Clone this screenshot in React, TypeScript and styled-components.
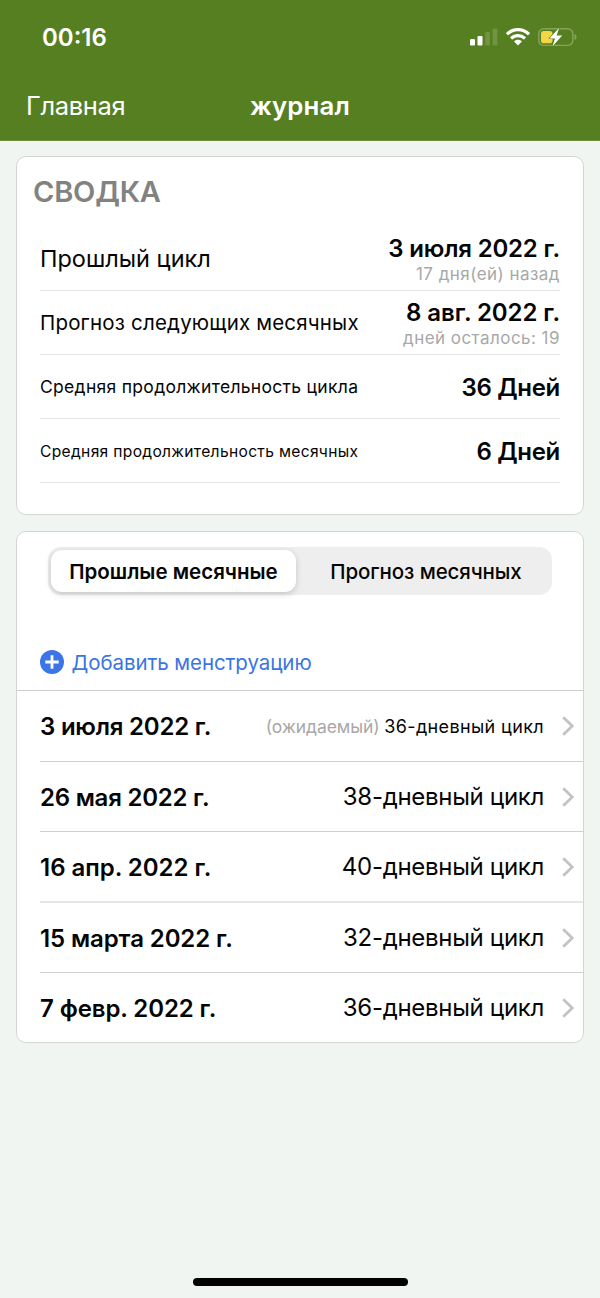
import React from "react";
import styled, { createGlobalStyle, css } from "styled-components";

const GlobalStyle = createGlobalStyle`
  * { box-sizing: border-box; }
  body { margin: 0; background: #f1f5f2; }
`;

const Screen = styled.div`
  width: 600px;
  height: 1298px;
  display: flex;
  flex-direction: column;
  overflow: hidden;
  background: #f1f5f2;
  color: #050505;
  font-family: Inter, "Liberation Sans", sans-serif;
  white-space: nowrap;
`;

const Header = styled.header`
  height: 141px;
  flex: none;
  background: #567f22;
  color: #fff;
  border-bottom: 1px solid #6a8e3c;
`;

const StatusBar = styled.div`
  height: 72px;
  padding: 1px 23px 0 42px;
  display: flex;
  align-items: center;
  justify-content: space-between;
`;

const Clock = styled.span`
  padding-top: 2px;
  font-size: 24px;
  font-weight: 600;
`;

const StatusIcons = styled.div`
  display: flex;
  align-items: center;
`;

const NavBar = styled.nav`
  height: 66px;
  padding: 0 26px;
  display: grid;
  grid-template-columns: 1fr auto 1fr;
  align-items: center;
`;

const BackLink = styled.a`
  font-size: 25.5px;
  letter-spacing: -0.35px;
`;

const NavTitle = styled.h1`
  margin: 0;
  font-size: 25.8px;
  font-weight: 600;
  letter-spacing: 0.2px;
`;

const Card = styled.section`
  margin: 0 16px 16px;
  border: 1px solid #d3d6d4;
  border-radius: 10px;
  background: #fff;
`;

const SummaryCard = styled(Card)`
  height: 359px;
  margin-top: 15px;
  padding: 0 23px;
`;

const JournalCard = styled(Card)`
  height: 512px;
`;

const SummaryTitle = styled.h2`
  height: 70px;
  margin: 0 0 0 -7px;
  font-size: 29px;
  font-weight: 600;
  line-height: 70px;
  letter-spacing: -0.2px;
  color: #828282;
`;

const SummaryRow = styled.div`
  height: 64px;
  display: flex;
  align-items: center;
  justify-content: space-between;
  border-bottom: 1px solid #e6e6e6;
`;

const SummaryLabel = styled.span<{ $size: number; $spacing: number }>`
  padding-top: ${(p) => (p.$size < 16 ? 2 : 0)}px;
  font-size: ${(p) => p.$size}px;
  letter-spacing: ${(p) => p.$spacing}px;
`;

const SummaryValue = styled.div`
  padding-top: 2px;
  display: flex;
  flex-direction: column;
  align-items: flex-end;
`;

const Strong = styled.strong<{ $spacing?: number }>`
  font-size: 24px;
  font-weight: 600;
  line-height: 28px;
  letter-spacing: ${(p) => p.$spacing ?? -0.18}px;
`;

const Note = styled.span`
  font-size: 17px;
  line-height: 22px;
  letter-spacing: 0.46px;
  color: #a8a8a8;
`;

const Segments = styled.div`
  height: 48px;
  margin: 15px 31px 0;
  padding: 3px;
  display: flex;
  border-radius: 13px;
  background: #eeeeee;
`;

const Segment = styled.button<{ $active?: boolean }>`
  flex: ${(p) => (p.$active ? "0 0 245px" : "1")};
  padding: ${(p) => (p.$active ? "1px 0 0" : "1px 0 0 7px")};
  border: 0;
  border-radius: 11px;
  background: transparent;
  color: inherit;
  font-family: inherit;
  font-size: 20.5px;
  font-weight: 500;
  letter-spacing: -0.1px;
  ${(p) =>
    p.$active &&
    css`
      background: #fff;
      font-weight: 600;
      letter-spacing: 0;
      box-shadow: 0 2px 6px rgba(0, 0, 0, 0.18);
    `}
`;

const AddRow = styled.div`
  height: 96px;
  padding: 39px 23px 0;
  display: flex;
  align-items: center;
  gap: 7.5px;
  border-bottom: 1px solid #cfcfcf;
  color: #3b75e2;
  font-size: 20.5px;
  letter-spacing: -0.08px;
`;

const List = styled.div`
  display: flex;
  flex-direction: column;
`;

const ListRow = styled.div<{ $height: number; $line?: string }>`
  height: ${(p) => p.$height}px;
  margin-left: 23px;
  padding-right: 9px;
  display: flex;
  align-items: center;
  border-bottom: ${(p) => p.$line ?? "0 none"};
`;

const PeriodDate = styled(Strong)`
  padding-top: 2px;
`;

const Cycle = styled.span<{ $small?: boolean }>`
  padding-top: ${(p) => (p.$small ? 1 : 0)}px;
  margin-left: auto;
  margin-right: 18px;
  font-size: ${(p) => (p.$small ? 18 : 24)}px;
  letter-spacing: ${(p) => (p.$small ? 0.36 : -0.3)}px;
`;

const Expected = styled.span`
  color: #a8a8a8;
  font-size: 17.5px;
  letter-spacing: -0.1px;
`;

const HomeIndicator = styled.div`
  width: 215px;
  height: 8px;
  margin: auto auto 12px;
  border-radius: 4px;
  background: #000;
`;

const SignalIcon = () => (
  <svg width="28" height="18" viewBox="0 0 28 18">
    <rect x="0" y="11" width="5" height="6.5" rx="1.2" fill="#fff" />
    <rect x="7.5" y="8" width="5" height="9.5" rx="1.2" fill="#fff" />
    <rect x="15.2" y="4" width="4.8" height="13.5" rx="1.2" fill="#70943f" />
    <rect x="22.6" y="0.5" width="4.8" height="17" rx="1.2" fill="#70943f" />
  </svg>
);

const WifiSvg = styled.svg`
  margin-left: 8px;
`;

const WifiIcon = () => (
  <WifiSvg width="24" height="18" viewBox="0 0 24 18" fill="#fff">
    <path d="M12 0C7.4 0 3.2 1.8.2 4.8a.6.6 0 0 0 0 .8l1.5 1.5a.6.6 0 0 0 .8 0A13.6 13.6 0 0 1 12 3.3c3.7 0 7 1.4 9.5 3.8a.6.6 0 0 0 .8 0l1.5-1.5a.6.6 0 0 0 0-.8A17 17 0 0 0 12 0z" />
    <path d="M12 5.9c-3 0-5.7 1.2-7.7 3.1a.6.6 0 0 0 0 .8l1.5 1.5a.6.6 0 0 0 .8 0A7.8 7.8 0 0 1 12 9.2c2.1 0 4 .8 5.4 2.1a.6.6 0 0 0 .8 0l1.5-1.5a.6.6 0 0 0 0-.8A11.1 11.1 0 0 0 12 5.9z" />
    <path d="M12 11.8c-1.4 0-2.6.5-3.5 1.3a.6.6 0 0 0 0 .9l3.1 3.1a.6.6 0 0 0 .8 0l3.1-3.1a.6.6 0 0 0 0-.9 5.2 5.2 0 0 0-3.5-1.3z" />
  </WifiSvg>
);

const BatterySvg = styled.svg`
  margin-left: 8px;
`;

const BatteryIcon = () => (
  <BatterySvg width="39" height="20" viewBox="0 0 39 20">
    <rect x="0.8" y="1.8" width="34" height="16.6" rx="5" fill="none" stroke="#86a45b" strokeWidth="1.4" />
    <path d="M36.5 7v6.2c1.3-.5 2-1.7 2-3.1s-.7-2.6-2-3.1z" fill="#86a45b" />
    <rect x="3" y="4" width="11.5" height="12.2" rx="2.8" fill="#f5d546" />
    <path
      d="M21.2 0.8 11.4 11.4h5.6l-2.6 8 9.8-10.8h-5.6z"
      fill="#fff"
      stroke="#567f22"
      strokeWidth="1.2"
      strokeLinejoin="round"
      paintOrder="stroke"
    />
  </BatterySvg>
);

const PlusIcon = () => (
  <svg width="24" height="24" viewBox="0 0 24 24">
    <circle cx="12" cy="12" r="12" fill="#3b75e8" />
    <path d="M12 5.3v13.4M5.3 12h13.4" stroke="#fff" strokeWidth="2.8" />
  </svg>
);

const ChevronIcon = () => (
  <svg width="12" height="20" viewBox="0 0 12 20">
    <path d="M1.2 1.2 10.2 10l-9 8.8" fill="none" stroke="#c3c3c3" strokeWidth="2.8" />
  </svg>
);

const summary = [
  { label: "Прошлый цикл", size: 23.5, spacing: 0, value: "3 июля 2022 г.", note: "17 дня(ей) назад" },
  { label: "Прогноз следующих месячных", size: 20.5, spacing: 0.18, value: "8 авг. 2022 г.", valueSpacing: -0.08, note: "дней осталось: 19" },
  { label: "Средняя продолжительность цикла", size: 17.5, spacing: 0.3, value: "36 Дней", valueSpacing: -0.32 },
  { label: "Средняя продолжительность месячных", size: 15.6, spacing: 0.32, value: "6 Дней", valueSpacing: -0.32 },
];

const periods = [
  { date: "3 июля 2022 г.", spacing: -0.22, days: 36, expected: true, height: 71, line: "1px solid #cfcfcf" },
  { date: "26 мая 2022 г.", spacing: -0.22, days: 38, height: 70, line: "1px solid #cfcfcf" },
  { date: "16 апр. 2022 г.", spacing: -0.02, days: 40, height: 71, line: "2px solid #e6e6e6" },
  { date: "15 марта 2022 г.", spacing: -0.1, days: 32, height: 70, line: "1px solid #cfcfcf" },
  { date: "7 февр. 2022 г.", spacing: -0.1, days: 36, height: 69 },
];

export default function App() {
  return (
    <Screen>
      <GlobalStyle />
      <Header>
        <StatusBar>
          <Clock>00:16</Clock>
          <StatusIcons>
            <SignalIcon />
            <WifiIcon />
            <BatteryIcon />
          </StatusIcons>
        </StatusBar>
        <NavBar>
          <BackLink>Главная</BackLink>
          <NavTitle>журнал</NavTitle>
        </NavBar>
      </Header>

      <SummaryCard>
        <SummaryTitle>СВОДКА</SummaryTitle>
        {summary.map((row) => (
          <SummaryRow key={row.label}>
            <SummaryLabel $size={row.size} $spacing={row.spacing}>
              {row.label}
            </SummaryLabel>
            <SummaryValue>
              <Strong $spacing={row.valueSpacing}>{row.value}</Strong>
              {row.note && <Note>{row.note}</Note>}
            </SummaryValue>
          </SummaryRow>
        ))}
      </SummaryCard>

      <JournalCard>
        <Segments>
          <Segment $active>Прошлые месячные</Segment>
          <Segment>Прогноз месячных</Segment>
        </Segments>
        <AddRow>
          <PlusIcon />
          <span>Добавить менструацию</span>
        </AddRow>
        <List>
          {periods.map((p) => (
            <ListRow key={p.date} $height={p.height} $line={p.line}>
              <PeriodDate $spacing={p.spacing}>{p.date}</PeriodDate>
              <Cycle $small={p.expected}>
                {p.expected && <Expected>(ожидаемый) </Expected>}
                {p.days}-дневный цикл
              </Cycle>
              <ChevronIcon />
            </ListRow>
          ))}
        </List>
      </JournalCard>
      <HomeIndicator />
    </Screen>
  );
}
